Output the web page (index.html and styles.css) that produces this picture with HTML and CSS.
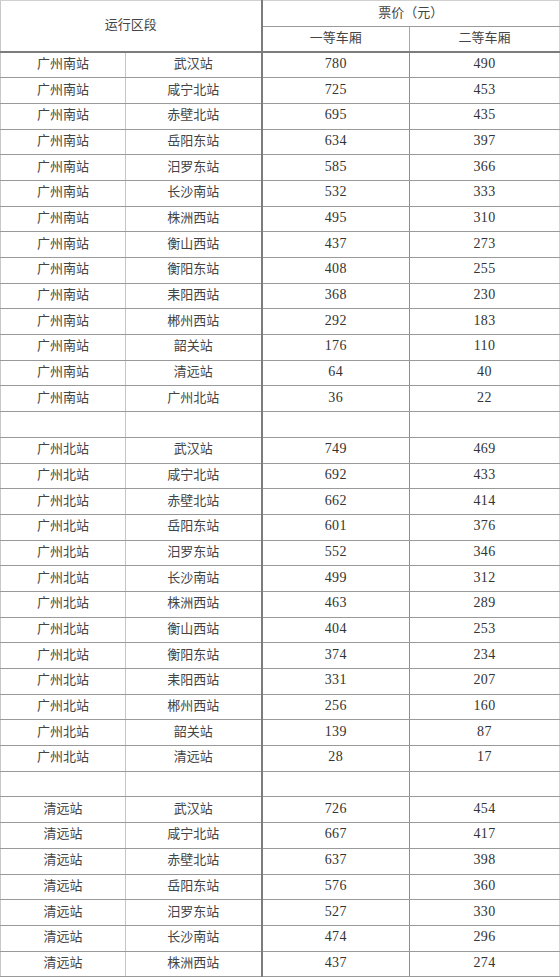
FILE: index.html
```html
<!DOCTYPE html>
<html lang="zh-CN">
<head>
<meta charset="utf-8">
<title>票价表</title>
<link rel="stylesheet" href="styles.css">
</head>
<body>
<table class="fares">
<colgroup><col class="c1"><col class="c2"><col class="c3"><col class="c4"></colgroup>
<thead>
<tr class="h1"><th colspan="2" rowspan="2" class="sec">运行区段</th><th colspan="2" class="price">票价（元）</th></tr>
<tr class="h2"><th class="first">一等车厢</th><th>二等车厢</th></tr>
</thead>
<tbody>
<tr><td>广州南站</td><td class="to">武汉站</td><td class="n first">780</td><td class="n">490</td></tr>
<tr><td>广州南站</td><td class="to">咸宁北站</td><td class="n first">725</td><td class="n">453</td></tr>
<tr><td>广州南站</td><td class="to">赤壁北站</td><td class="n first">695</td><td class="n">435</td></tr>
<tr><td>广州南站</td><td class="to">岳阳东站</td><td class="n first">634</td><td class="n">397</td></tr>
<tr><td>广州南站</td><td class="to">汨罗东站</td><td class="n first">585</td><td class="n">366</td></tr>
<tr><td>广州南站</td><td class="to">长沙南站</td><td class="n first">532</td><td class="n">333</td></tr>
<tr><td>广州南站</td><td class="to">株洲西站</td><td class="n first">495</td><td class="n">310</td></tr>
<tr><td>广州南站</td><td class="to">衡山西站</td><td class="n first">437</td><td class="n">273</td></tr>
<tr><td>广州南站</td><td class="to">衡阳东站</td><td class="n first">408</td><td class="n">255</td></tr>
<tr><td>广州南站</td><td class="to">耒阳西站</td><td class="n first">368</td><td class="n">230</td></tr>
<tr><td>广州南站</td><td class="to">郴州西站</td><td class="n first">292</td><td class="n">183</td></tr>
<tr><td>广州南站</td><td class="to">韶关站</td><td class="n first">176</td><td class="n">110</td></tr>
<tr><td>广州南站</td><td class="to">清远站</td><td class="n first">64</td><td class="n">40</td></tr>
<tr><td>广州南站</td><td class="to">广州北站</td><td class="n first">36</td><td class="n">22</td></tr>
<tr class="blank"><td></td><td class="to"></td><td class="n first"></td><td class="n"></td></tr>
<tr><td>广州北站</td><td class="to">武汉站</td><td class="n first">749</td><td class="n">469</td></tr>
<tr><td>广州北站</td><td class="to">咸宁北站</td><td class="n first">692</td><td class="n">433</td></tr>
<tr><td>广州北站</td><td class="to">赤壁北站</td><td class="n first">662</td><td class="n">414</td></tr>
<tr><td>广州北站</td><td class="to">岳阳东站</td><td class="n first">601</td><td class="n">376</td></tr>
<tr><td>广州北站</td><td class="to">汨罗东站</td><td class="n first">552</td><td class="n">346</td></tr>
<tr><td>广州北站</td><td class="to">长沙南站</td><td class="n first">499</td><td class="n">312</td></tr>
<tr><td>广州北站</td><td class="to">株洲西站</td><td class="n first">463</td><td class="n">289</td></tr>
<tr><td>广州北站</td><td class="to">衡山西站</td><td class="n first">404</td><td class="n">253</td></tr>
<tr><td>广州北站</td><td class="to">衡阳东站</td><td class="n first">374</td><td class="n">234</td></tr>
<tr><td>广州北站</td><td class="to">耒阳西站</td><td class="n first">331</td><td class="n">207</td></tr>
<tr><td>广州北站</td><td class="to">郴州西站</td><td class="n first">256</td><td class="n">160</td></tr>
<tr><td>广州北站</td><td class="to">韶关站</td><td class="n first">139</td><td class="n">87</td></tr>
<tr><td>广州北站</td><td class="to">清远站</td><td class="n first">28</td><td class="n">17</td></tr>
<tr class="blank"><td></td><td class="to"></td><td class="n first"></td><td class="n"></td></tr>
<tr><td>清远站</td><td class="to">武汉站</td><td class="n first">726</td><td class="n">454</td></tr>
<tr><td>清远站</td><td class="to">咸宁北站</td><td class="n first">667</td><td class="n">417</td></tr>
<tr><td>清远站</td><td class="to">赤壁北站</td><td class="n first">637</td><td class="n">398</td></tr>
<tr><td>清远站</td><td class="to">岳阳东站</td><td class="n first">576</td><td class="n">360</td></tr>
<tr><td>清远站</td><td class="to">汨罗东站</td><td class="n first">527</td><td class="n">330</td></tr>
<tr><td>清远站</td><td class="to">长沙南站</td><td class="n first">474</td><td class="n">296</td></tr>
<tr><td>清远站</td><td class="to">株洲西站</td><td class="n first">437</td><td class="n">274</td></tr>
</tbody>
</table>
</body>
</html>
```

FILE: styles.css
```css
html, body {
  margin: 0;
  padding: 0;
  background: #ffffff;
}

.fares {
  border-collapse: collapse;
  table-layout: fixed;
  width: 560px;
  font-family: "Noto Sans CJK SC", "Liberation Serif", serif;
  font-size: 13px;
  color: #444444;
  border-top: 1px solid #d0d0d0;
  border-left: 1px solid #c8c8c8;
}

.c1 { width: 125px; }
.c2 { width: 136px; }
.c3 { width: 148px; }
.c4 { width: 150px; }

.fares th,
.fares td {
  padding: 0 0 5px 0;
  text-align: center;
  vertical-align: middle;
  font-weight: 400;
  border-right: 1px solid #a8a8a8;
  border-bottom: 1px solid #9a9a9a;
  line-height: 1;
  overflow: hidden;
  white-space: nowrap;
}

.fares th:last-child,
.fares td:last-child {
  border-right: 1px solid #d4d4d4;
}

.h1 th { height: 20px; }
.h2 th { height: 19px; }

.fares thead .sec {
  border-right: 2px solid #7c7c7c;
  border-bottom: 2px solid #7c7c7c;
}

.fares thead .h2 th {
  border-bottom: 2px solid #7c7c7c;
}

.fares tbody tr {
  height: 25.69px;
}

.fares td {
  border-right-color: #c4c4c4;
}

.fares td.to {
  border-right: 2px solid #7c7c7c;
}

.fares td.first {
  border-right: 1px solid #8e8e8e;
}

.fares .n {
  padding-bottom: 2px;
  font-family: "Liberation Serif", "Noto Sans CJK SC", serif;
  font-size: 14px;
  letter-spacing: 0.4px;
  color: #333333;
}
```
